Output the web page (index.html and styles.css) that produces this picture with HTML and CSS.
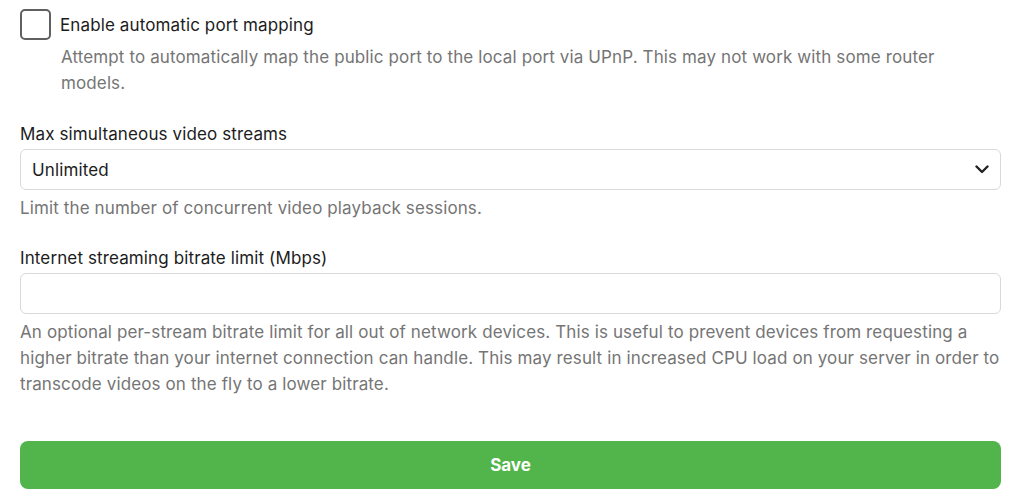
FILE: index.html
```html
<!DOCTYPE html>
<html>
<head>
<meta charset="utf-8">
<link rel="stylesheet" href="styles.css">
</head>
<body>
<div class="form">
  <div class="check-row">
    <span class="checkbox"></span>
    <span class="check-label">Enable automatic port mapping</span>
  </div>
  <div class="check-desc">Attempt to automatically map the public port to the local port via UPnP. This may not work with some router models.</div>

  <div class="field">
    <div class="label">Max simultaneous video streams</div>
    <div class="select">
      <span>Unlimited</span>
      <svg class="chev" width="14" height="9" viewBox="0 0 14 9"><path d="M1.5 1.5 L7 7 L12.5 1.5" fill="none" stroke="#222" stroke-width="2.4" stroke-linecap="round" stroke-linejoin="round"/></svg>
    </div>
    <div class="help">Limit the number of concurrent video playback sessions.</div>
  </div>

  <div class="field">
    <div class="label">Internet streaming bitrate limit (Mbps)</div>
    <div class="input"></div>
    <div class="help">An optional per-stream bitrate limit for all out of network devices. This is useful to prevent devices from requesting a higher bitrate than your internet connection can handle. This may result in increased CPU load on your server in order to transcode videos on the fly to a lower bitrate.</div>
  </div>

  <button class="save">Save</button>
</div>
</body>
</html>
```
FILE: styles.css
```css
html, body {
  margin: 0;
  padding: 0;
  background: #fff;
}
body {
  font-family: Inter, "Noto Sans", sans-serif;
  font-size: 17px;
  letter-spacing: 0.12px;
  color: #1c1c1c;
}
.form {
  padding: 9px 21px 0 20px;
  display: flex;
  flex-direction: column;
}
.check-row {
  display: flex;
  align-items: center;
  gap: 9px;
  height: 31px;
}
.checkbox {
  width: 27px;
  height: 27px;
  border: 2px solid #606060;
  border-radius: 5px;
  box-sizing: content-box;
  flex: none;
}
.check-label {
  line-height: 26px;
}
.check-desc {
  margin-left: 41px;
  margin-top: 4px;
  color: #757575;
  line-height: 26px;
}
.field {
  margin-top: 25px;
  display: flex;
  flex-direction: column;
}
.field + .field {
  margin-top: 24px;
}
.label {
  line-height: 26px;
  margin-bottom: 2px;
}
.select, .input {
  height: 39px;
  border: 1px solid #d9d9d9;
  border-radius: 6px;
  box-sizing: content-box;
}
.select {
  display: flex;
  align-items: center;
  justify-content: space-between;
  padding: 0 11px;
}
.chev {
  display: block;
}
.help {
  margin-top: 5px;
  color: #757575;
  line-height: 26px;
}
.save {
  margin-top: 44px;
  height: 48px;
  border: none;
  border-radius: 8px;
  background: #52b54b;
  color: #fff;
  font-family: Inter, "Noto Sans", sans-serif;
  font-weight: 700;
  font-size: 17px;
}
```
